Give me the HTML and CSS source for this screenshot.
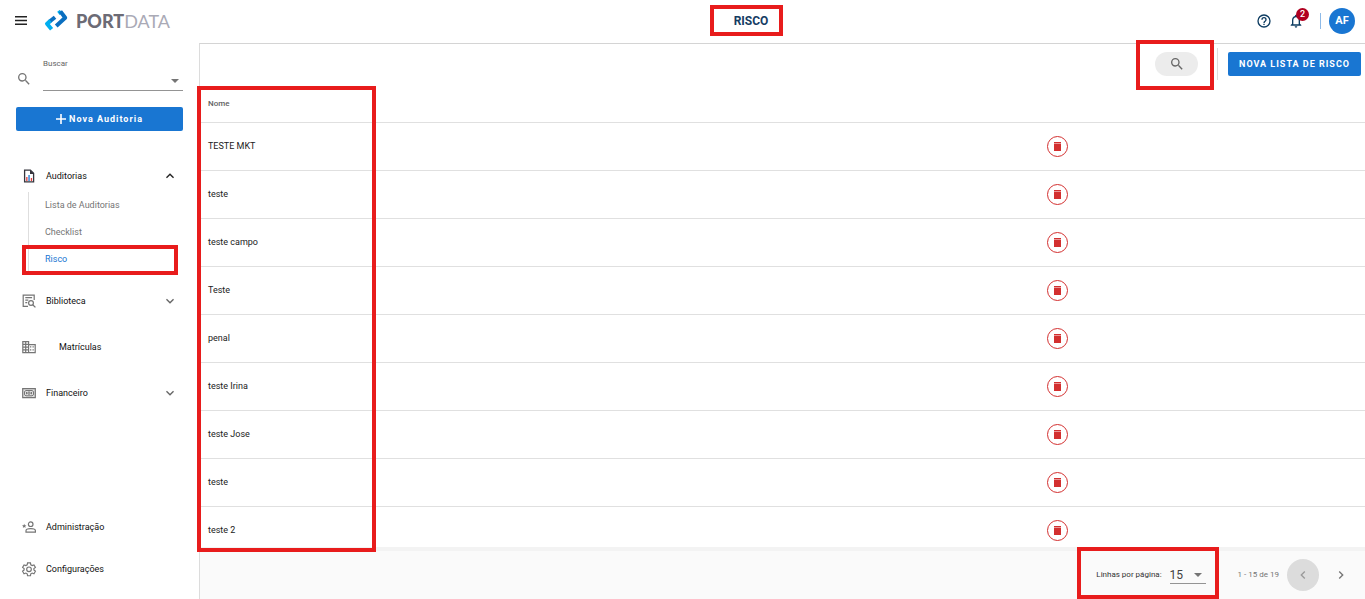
FILE: index.html
```html
<!DOCTYPE html>
<html lang="pt-BR">
<head>
<meta charset="utf-8">
<meta name="viewport" content="width=device-width, initial-scale=1">
<title>Portdata - Risco</title>
<link rel="stylesheet" href="styles.css">
</head>
<body>
<svg class="sprite" aria-hidden="true">
  <symbol id="trash" viewBox="0 0 11 11"><path d="M2 3h7v7H2zM2 1h7v1.400H2z"/></symbol>
  <symbol id="search" viewBox="0 0 24 24"><path d="M15.500 14h-.79l-.28-.27A6.470 6.470 0 0 0 16 9.500 6.500 6.500 0 1 0 9.500 16c1.610 0 3.090-.59 4.230-1.570l.27.28v.79l5 4.990L20.490 19zm-6 0a4.500 4.500 0 1 1 0-9 4.500 4.500 0 0 1 0 9z"/></symbol>
  <symbol id="down" viewBox="0 0 24 24"><path d="M7.410 8.590 12 13.170l4.590-4.580L18 10l-6 6-6-6z"/></symbol>
  <symbol id="up" viewBox="0 0 24 24"><path d="M7.410 15.410 12 10.830l4.590 4.580L18 14l-6-6-6 6z"/></symbol>
  <symbol id="left" viewBox="0 0 24 24"><path d="M15.410 7.410 14 6l-6 6 6 6 1.410-1.410L10.830 12z"/></symbol>
  <symbol id="right" viewBox="0 0 24 24"><path d="M8.590 16.590 10 18l6-6-6-6-1.410 1.410L13.170 12z"/></symbol>
</svg>

<header class="topbar">
  <div class="brand">
    <button class="icon-button menu-button" aria-label="Menu">
      <svg viewBox="0 0 12 9" width="12" height="9"><path d="M0 0h12v1.500H0zM0 3.700h12v1.500H0zM0 7.400h12v1.500H0z"/></svg>
    </button>
    <a class="logo" href="#">
      <svg viewBox="0 0 24 22" width="24" height="22" aria-hidden="true">
        <g fill="none" stroke-width="4" stroke-linejoin="round">
          <path stroke="#0b6fc0" d="M11 7.200 5 12"/>
          <path stroke="#00aeef" d="M6.500 10.800 3 13.700l4.600 5.600"/>
          <path stroke="#00aeef" d="m14.400 3.400 2.600-1.900"/>
          <path stroke="#0b6fc0" d="m16.400 1.400 4.800 6.300-9 8.300"/>
        </g>
      </svg>
      <span class="logo-text"><b>PORT</b>DATA</span>
    </a>
  </div>
  <h1 class="page-title">RISCO<span class="mark mark-title"></span></h1>
  <div class="account">
    <button class="icon-button" aria-label="Ajuda">
      <svg viewBox="0 0 24 24" width="16" height="16"><path d="M11 18h2v-2h-2zm1-16a10 10 0 1 0 0 20 10 10 0 0 0 0-20zm0 18a8 8 0 1 1 0-16 8 8 0 0 1 0 16zm0-14a4 4 0 0 0-4 4h2a2 2 0 1 1 4 0c0 2-3 1.750-3 5h2c0-2.250 3-2.500 3-5a4 4 0 0 0-4-4z"/></svg>
    </button>
    <button class="icon-button bell" aria-label="Notificações">
      <svg viewBox="0 0 24 24" width="16" height="16"><path d="M12 22a2 2 0 0 0 2-2h-4a2 2 0 0 0 2 2zm6-6v-5c0-3.070-1.630-5.640-4.500-6.320V4a1.500 1.500 0 0 0-3 0v.68C7.640 5.360 6 7.920 6 11v5l-2 2v1h16v-1zm-2 1H8v-6c0-2.480 1.510-4.500 4-4.500s4 2.020 4 4.500z"/></svg>
      <span class="badge">2</span>
    </button>
    <span class="account-divider"></span>
    <button class="avatar">AF</button>
  </div>
</header>

<div class="layout">
  <aside class="sidebar">
    <div class="finder">
      <svg class="finder-icon" width="16" height="16"><use href="#search"/></svg>
      <div class="finder-field">
        <label for="finder">Buscar</label>
        <select id="finder" class="line-select"><option></option></select>
      </div>
    </div>
    <button class="primary new-audit"><svg viewBox="0 0 10 10" width="10" height="10"><path d="M4.200 0h1.600v4.200H10v1.600H5.800V10H4.200V5.800H0V4.200h4.200z"/></svg>Nova Auditoria</button>

    <nav class="nav">
      <a class="nav-item" href="#">
        <svg class="nav-icon" viewBox="0 0 14 14" width="14" height="14"><path fill="none" stroke="#35353d" stroke-width="1.300" d="M2.600 1.100h5.800l3.200 3.200v8.600h-9z"/><path fill="#35353d" d="M8 1v4h4z"/><path fill="#e23b3b" d="M4.200 8h1.300v4H4.200z"/><path fill="#1976d2" d="M6.400 6h1.300v6H6.400z"/><path fill="#e23b3b" d="M8.800 9h1.300v3H8.800z"/></svg>
        <span>Auditorias</span>
        <svg class="chevron dark" width="16" height="16"><use href="#up"/></svg>
      </a>
      <div class="subnav">
        <a href="#">Lista de Auditorias</a>
        <a href="#">Checklist</a>
        <a class="current" href="#">Risco</a>
        <span class="mark mark-nav"></span>
      </div>
      <a class="nav-item" href="#">
        <svg class="nav-icon" viewBox="0 0 14 14" width="14" height="14"><path fill="none" stroke="#757575" stroke-width="1.200" d="M6 12.400H1.200V1.100h11v5M3.300 3.700h6.800M3.300 6.200h3M3.300 8.700h2"/><circle cx="9" cy="9" r="2.400" fill="none" stroke="#757575" stroke-width="1.200"/><path stroke="#757575" stroke-width="1.300" d="m10.700 10.700 2.700 2.700"/></svg>
        <span>Biblioteca</span>
        <svg class="chevron" width="16" height="16"><use href="#down"/></svg>
      </a>
      <a class="nav-item indented" href="#">
        <svg class="nav-icon" viewBox="0 0 14 14" width="14" height="14"><path fill="none" stroke="#757575" stroke-width="1.200" d="M.8 1.600h5.800v11H.8zM6.600 4.600h6.600v8H6.600M.8 4.300h5.800M.8 7.100h5.800M.8 9.800h5.800M3.700 1.600v11"/><path fill="#757575" d="M8 6.300h1.300v1.300H8zm2.500 0h1.300v1.300h-1.300zM8 9.200h1.300v1.300H8zm2.500 0h1.300v1.300h-1.300z"/></svg>
        <span>Matrículas</span>
      </a>
      <a class="nav-item" href="#">
        <svg class="nav-icon" viewBox="0 0 14 14" width="14" height="14"><path fill="#dedede" stroke="#757575" stroke-width="1.200" d="M.7 2.600h12.600v9H.7z"/><path fill="none" stroke="#757575" d="M2.500 5.500 4 4.500h6l1.500 1v3.300l-1.500 1H4l-1.500-1z"/><path fill="none" stroke="#757575" d="M4.500 6v2.200M9.500 6v2.200"/><circle cx="7" cy="7.100" r="1.200" fill="none" stroke="#757575"/></svg>
        <span>Financeiro</span>
        <svg class="chevron" width="16" height="16"><use href="#down"/></svg>
      </a>
    </nav>

    <nav class="nav nav-bottom">
      <a class="nav-item" href="#">
        <svg class="nav-icon" viewBox="0 0 14 14" width="14" height="14"><circle cx="8.700" cy="4.200" r="2.300" fill="none" stroke="#757575" stroke-width="1.200"/><path fill="none" stroke="#757575" stroke-width="1.200" d="M4 12.200v-1.500C4 9.300 7 8.700 8.700 8.700s4.700.6 4.700 2v1.500z"/><path fill="#757575" d="m2.200 3.800.6 1.500 1.600.1-1.200 1 .4 1.600-1.400-.9L.8 8l.4-1.600-1.200-1 1.600-.1z"/></svg>
        <span>Administração</span>
      </a>
      <a class="nav-item" href="#">
        <svg class="nav-icon" viewBox="0 0 24 24" width="14" height="14"><path fill="none" stroke="#757575" stroke-width="2" d="M9.500 1.500h5l.6 3.300 2.300 1.300 3.100-1.200 2.500 4.300-2.600 2.100v2.400l2.600 2.100-2.500 4.300-3.100-1.200-2.300 1.300-.6 3.300h-5l-.6-3.300-2.300-1.300-3.100 1.200L1 15.800l2.600-2.100v-2.400L1 9.200l2.500-4.300 3.100 1.200 2.300-1.300z"/><circle cx="12" cy="12.500" r="4" fill="none" stroke="#757575" stroke-width="2"/></svg>
        <span>Configurações</span>
      </a>
    </nav>
  </aside>

  <main class="content">
    <div class="toolbar">
      <button class="search-pill" aria-label="Pesquisar"><svg width="16" height="16"><use href="#search"/></svg><span class="mark mark-search"></span></button>
      <span class="toolbar-divider"></span>
      <button class="primary new-list">NOVA LISTA DE RISCO</button>
    </div>
    <div class="table-area">
      <div class="table-scroll">
        <table class="risks">
          <thead><tr><th class="name-column">Nome</th><th></th></tr></thead>
          <tbody>
            <tr><td>TESTE MKT</td><td><button class="delete" aria-label="Excluir"><svg width="11" height="11"><use href="#trash"/></svg></button></td></tr>
            <tr><td>teste</td><td><button class="delete" aria-label="Excluir"><svg width="11" height="11"><use href="#trash"/></svg></button></td></tr>
            <tr><td>teste campo</td><td><button class="delete" aria-label="Excluir"><svg width="11" height="11"><use href="#trash"/></svg></button></td></tr>
            <tr><td>Teste</td><td><button class="delete" aria-label="Excluir"><svg width="11" height="11"><use href="#trash"/></svg></button></td></tr>
            <tr><td>penal</td><td><button class="delete" aria-label="Excluir"><svg width="11" height="11"><use href="#trash"/></svg></button></td></tr>
            <tr><td>teste Irina</td><td><button class="delete" aria-label="Excluir"><svg width="11" height="11"><use href="#trash"/></svg></button></td></tr>
            <tr><td>teste Jose</td><td><button class="delete" aria-label="Excluir"><svg width="11" height="11"><use href="#trash"/></svg></button></td></tr>
            <tr><td>teste</td><td><button class="delete" aria-label="Excluir"><svg width="11" height="11"><use href="#trash"/></svg></button></td></tr>
            <tr><td>teste 2</td><td><button class="delete" aria-label="Excluir"><svg width="11" height="11"><use href="#trash"/></svg></button></td></tr>
          </tbody>
        </table>
      </div>
      <span class="mark mark-names"></span>
    </div>
    <footer class="pager">
      <div class="page-size">
        <label for="page-size">Linhas por página:</label>
        <select id="page-size" class="line-select size-select"><option>15</option></select>
        <span class="mark mark-size"></span>
      </div>
      <span class="range">1 - 15 de 19</span>
      <button class="page-button" disabled aria-label="Página anterior"><svg width="16" height="16"><use href="#left"/></svg></button>
      <button class="page-button" aria-label="Próxima página"><svg width="16" height="16"><use href="#right"/></svg></button>
    </footer>
  </main>
</div>
</body>
</html>
```
FILE: styles.css
```css
* { box-sizing: border-box; }

body {
  margin: 0;
  height: 100vh;
  display: flex;
  flex-direction: column;
  overflow: hidden;
  background: #fff;
  color: #212121;
  font: 9px/16px Roboto, "Liberation Sans", sans-serif;
}

button, select { font: inherit; color: inherit; }
button { border: 0; padding: 0; background: none; cursor: pointer; }
a { color: inherit; text-decoration: none; }
svg { display: block; fill: currentColor; flex: none; }
.sprite { position: absolute; width: 0; height: 0; }

/* Highlight frames over the interface */
.mark {
  position: absolute;
  border: 4px solid #e81c1c;
  pointer-events: none;
  z-index: 2;
}
.mark-title { inset: -8px -15px -7px -24px; }
.mark-nav { left: -7px; right: 5px; bottom: -3px; height: 30px; }
.mark-search { inset: -12px -16px -14px -19px; }
.mark-names { left: -3px; top: 2px; bottom: -5px; width: 179px; }
.mark-size { inset: -20px -13px -15px -19px; }

/* Top bar */
.topbar {
  flex: none;
  height: 43px;
  display: grid;
  grid-template-columns: 1fr auto 1fr;
  align-items: center;
  padding: 0 10px 2px 15px;
}
.brand { display: flex; align-items: center; gap: 17px; }
.icon-button { position: relative; display: flex; }
.menu-button { color: #222; }
.logo { display: flex; align-items: center; gap: 8px; }
.logo-text { font: 400 18px/22px Lato, sans-serif; color: #aaaab6; }
.logo-text b { font-weight: 900; color: #6c6b75; }
.page-title {
  position: relative;
  margin: 0 0 0 132px;
  font: 700 12px/16px Roboto, sans-serif;
  color: #153c63;
}
.account { display: flex; align-items: center; justify-content: flex-end; gap: 16px; color: #0d3c61; }
.badge {
  position: absolute;
  left: 8px;
  top: -5px;
  width: 13px;
  height: 13px;
  border-radius: 50%;
  background: #b00020;
  color: #fff;
  font: 500 9px/13px Roboto, sans-serif;
  text-align: center;
}
.account-divider { width: 1px; height: 16px; background: #8ebae8; }
.avatar {
  width: 26px;
  height: 26px;
  margin-left: -8px;
  border-radius: 50%;
  background: #1976d2;
  color: #fff;
  font-size: 11px;
  font-weight: 700;
}

.layout { flex: 1; min-height: 0; display: flex; }

/* Sidebar */
.sidebar { flex: none; width: 199px; padding: 13px 16px 9px; display: flex; flex-direction: column; }
.finder { display: flex; gap: 11px; }
.finder-icon { margin-top: 15px; color: #757575; }
.finder-field { flex: 1; display: flex; flex-direction: column; color: #666; }
.finder-field label { font-size: 8px; }
.line-select {
  appearance: none;
  width: 100%;
  height: 19px;
  padding: 0;
  border: 0;
  border-bottom: 1px solid #949494;
  border-radius: 0;
  background: no-repeat right 4px center / 8px 4px url("data:image/svg+xml,%3Csvg xmlns='http://www.w3.org/2000/svg' viewBox='0 0 8 4'%3E%3Cpath fill='%23757575' d='M0 0h8L4 4z'/%3E%3C/svg%3E");
}
.primary {
  flex: none;
  display: flex;
  align-items: center;
  justify-content: center;
  gap: 3px;
  height: 24px;
  border-radius: 2px;
  background: #1976d2;
  color: #fff;
  font-weight: 700;
}
.new-audit { margin: 16px 0 32px; letter-spacing: 1px; }
.nav { display: flex; flex-direction: column; gap: 21px; }
.nav-item {
  display: flex;
  align-items: center;
  gap: 10px;
  height: 25px;
  padding: 0 5px 0 6px;
  color: #111;
}
.nav-icon { overflow: visible; }
.indented { gap: 23px; }
.chevron { margin-left: auto; color: #666; }
.dark { color: #222; }
.subnav {
  position: relative;
  display: flex;
  flex-direction: column;
  gap: 11px;
  margin: -17px 0 -5px 12px;
  padding: 5px 0 5px 16px;
  border-left: 1px solid #dedede;
  color: #757575;
}
.current { color: #1976d2; }
.nav-bottom { margin-top: auto; gap: 17px; padding-bottom: 9px; }

/* Content */
.content {
  flex: 1;
  min-width: 0;
  display: flex;
  flex-direction: column;
  border-left: 1px solid #dcdcdc;
  border-top: 1px solid #d4d4d4;
}
.toolbar {
  flex: none;
  display: flex;
  align-items: center;
  justify-content: flex-end;
  height: 40px;
  padding-right: 4px;
  gap: 10px;
}
.search-pill {
  position: relative;
  display: flex;
  align-items: center;
  justify-content: center;
  width: 43px;
  height: 24px;
  margin-right: 9px;
  border-radius: 12px;
  background: #ececec;
  color: #666;
}
.toolbar-divider { width: 1px; height: 32px; background: #dcdcdc; }
.new-list { padding: 0 11px; letter-spacing: 1px; }
.table-area { position: relative; flex: 1; min-height: 0; }
.table-scroll { height: 100%; overflow: hidden; }
.risks { width: 100%; border-collapse: collapse; table-layout: fixed; }
.risks th, .risks td {
  height: 48px;
  padding: 0 8px;
  border-bottom: 1px solid #e0e0e0;
  text-align: left;
}
.risks th { height: 38px; padding-top: 2px; font-size: 8px; font-weight: 500; color: #616161; }
.name-column { width: 72%; }
.delete {
  display: flex;
  align-items: center;
  justify-content: center;
  width: 21px;
  height: 21px;
  border: 1px solid #d32f2f;
  border-radius: 50%;
  color: #d32f2f;
}

/* Pagination */
.pager {
  flex: none;
  display: flex;
  align-items: center;
  justify-content: flex-end;
  height: 52px;
  padding: 0 8px 0 0;
  border-top: 4px solid #f3f3f3;
  background: #fafafa;
  color: #757575;
}
.page-size { position: relative; display: flex; align-items: center; gap: 8px; color: #333; font-size: 8px; }
.size-select { width: 36px; height: 17px; font-size: 12px; color: #424242; }
.range { margin: 0 8px 0 32px; font-size: 8px; }
.page-button {
  display: flex;
  align-items: center;
  justify-content: center;
  width: 32px;
  height: 32px;
  border-radius: 50%;
}
.page-button + .page-button { margin-left: 6px; }
.page-button:disabled { background: #dcdcdc; color: #999; }
```
